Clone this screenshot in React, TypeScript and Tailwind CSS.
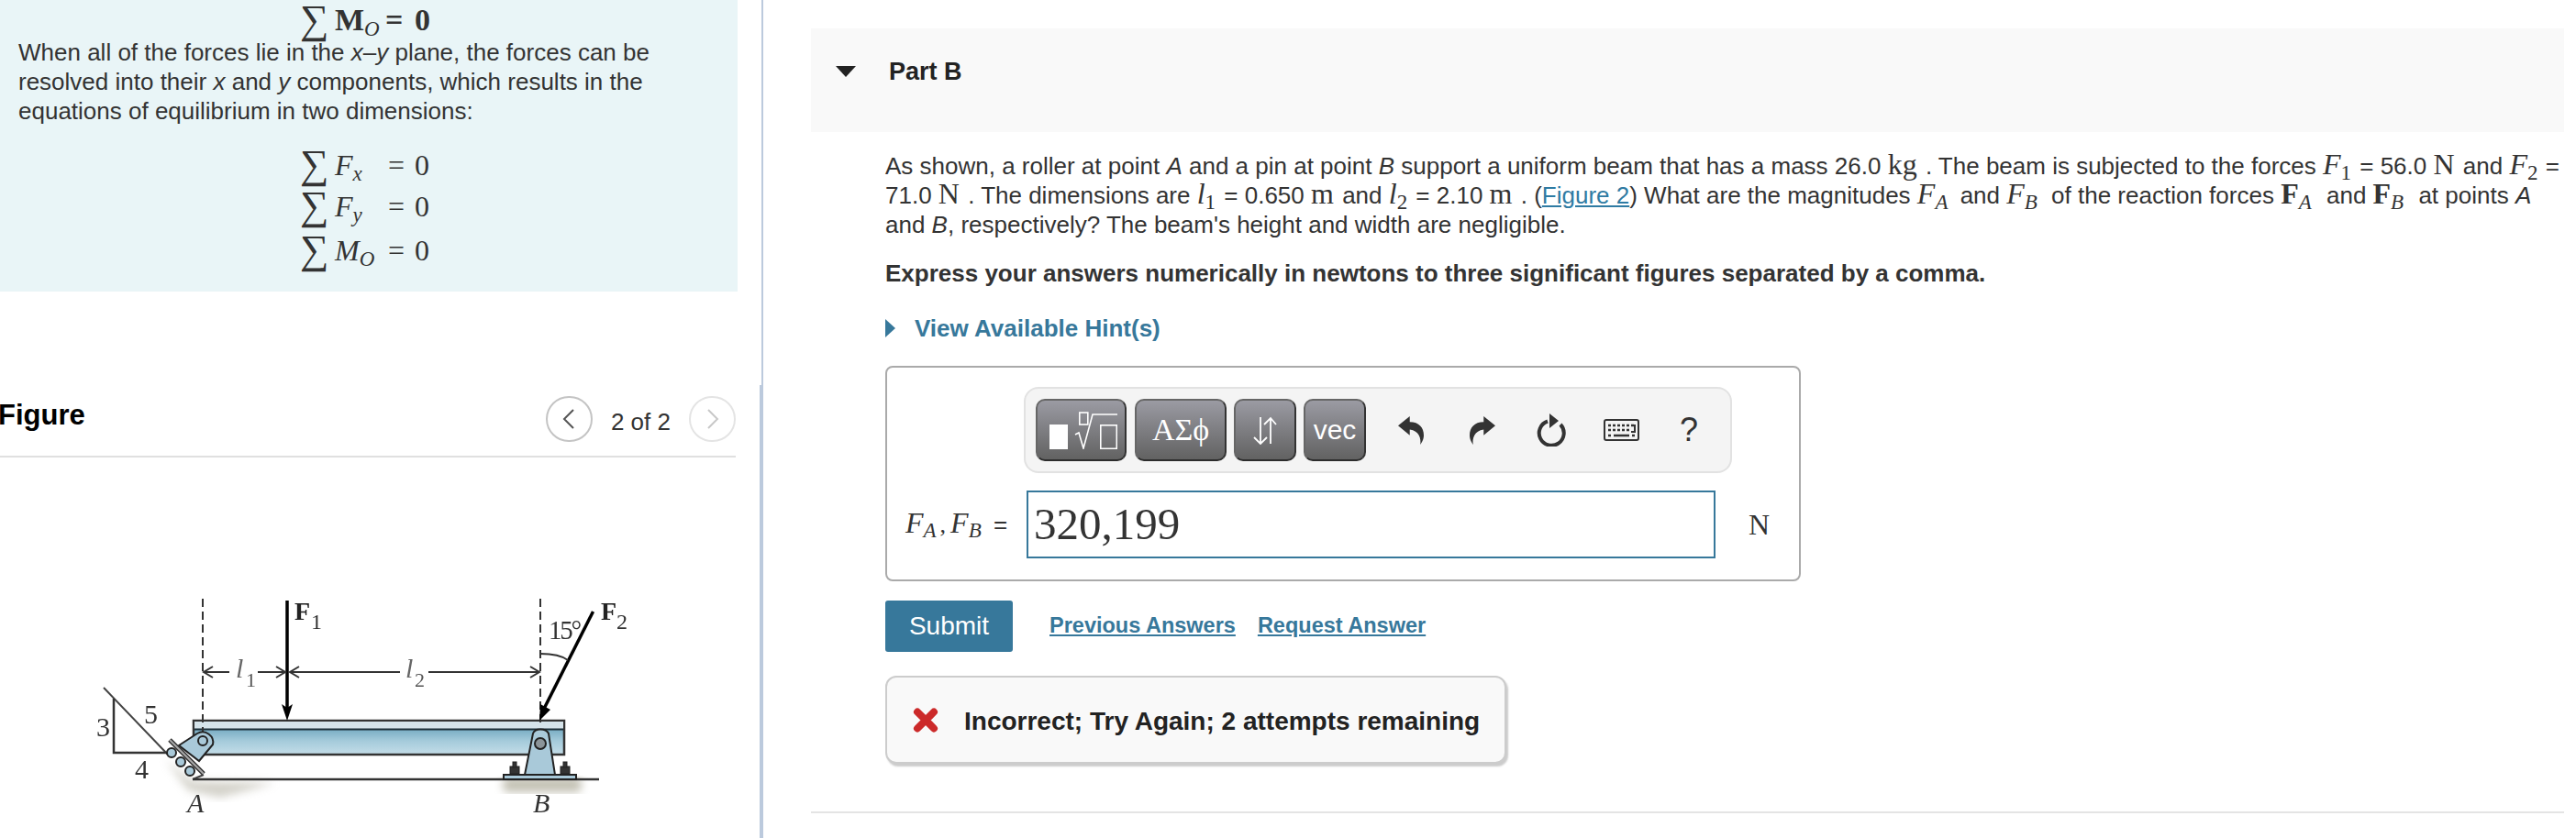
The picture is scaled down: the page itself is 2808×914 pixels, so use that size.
function Sum() {
  return <span className="inline-block w-[38px] font-['Liberation_Serif',serif] text-[44px] leading-[32px] font-normal">∑</span>;
}

function M({ children, sub, bold, plainSub, className }: { children: React.ReactNode; sub?: string; bold?: boolean; plainSub?: boolean; className?: string }) {
  return (
    <span className={`font-['Liberation_Serif',serif] text-[32px] leading-[0] ${bold ? "font-bold" : "italic"} ${className ?? ""}`}>
      {children}
      {sub && <sub className={`text-[23px] font-normal ${plainSub ? "not-italic" : "italic"}`}>{sub}</sub>}
    </span>
  );
}

function R({ children, className }: { children: React.ReactNode; className?: string }) {
  return <span className={`font-['Liberation_Serif',serif] text-[32px] leading-[0] ${className ?? ""}`}>{children}</span>;
}

function EqRow({ name, sub, bold, top }: { name: string; sub: string; bold?: boolean; top?: string }) {
  return (
    <div className={`flex items-center h-[44px] font-['Liberation_Serif',serif] leading-[32px] text-[#333] ${bold ? "text-[34px]" : "text-[32px]"} ${top ?? ""}`}>
      <Sum />
      <span className={bold ? "w-[55px] font-bold" : "w-[58px] italic"}>
        {name}
        <sub className="text-[23px] italic font-normal">{sub}</sub>
      </span>
      <span className={bold ? "font-bold" : ""}>
        = <span className={bold ? "ml-[4px]" : "ml-[3px]"}>0</span>
      </span>
    </div>
  );
}

function Chevron({ dir, muted }: { dir: "l" | "r"; muted?: boolean }) {
  return (
    <div className={`w-[51px] h-[50px] rounded-full border-2 flex items-center justify-center ${muted ? "border-[#e4e4e4]" : "border-[#c4c4c4]"}`}>
      <svg width="16" height="24" viewBox="0 0 16 24" fill="none" stroke={muted ? "#c8c8c8" : "#555"} strokeWidth="2">
        <path d={dir === "l" ? "M13 2 L3 12 L13 22" : "M3 2 L13 12 L3 22"} />
      </svg>
    </div>
  );
}

function BeamFigure() {
  return (
    <svg width="700" height="290" viewBox="0 0 700 290" className="block blur-[0.5px]">
      <defs>
        <linearGradient id="web" x1="0" y1="0" x2="0" y2="1">
          <stop offset="0" stopColor="#5896b2" />
          <stop offset="0.6" stopColor="#a5cbdb" />
          <stop offset="1" stopColor="#c4dde8" />
        </linearGradient>
        <filter id="soft">
          <feGaussianBlur stdDeviation="5" />
        </filter>
      </defs>
      {/* origin of this drawing is page x 0, y 620 */}
      <path d="M180 208 L210 232 L300 234 L240 250 L205 242 Z" fill="#c9c7bd" filter="url(#soft)" opacity="0.8" />
      <rect x="548" y="228" width="86" height="16" rx="6" fill="#c4c2b5" filter="url(#soft)" />
      <path d="M113 130 L183 203 M210 230 L222 225" stroke="#444" strokeWidth="2" fill="none" />
      <path d="M124 142 V201 H182" stroke="#333" strokeWidth="2.5" fill="none" />
      <path d="M210 230 H653" stroke="#333" strokeWidth="2.5" />
      <rect x="211" y="166" width="404" height="37" fill="url(#web)" stroke="#333" strokeWidth="2.5" />
      <rect x="212" y="167" width="402" height="8" fill="#d5e3ea" />
      <path d="M212 175.5 H614" stroke="#1c2f38" strokeWidth="2" />
      <path d="M221 33 V186" stroke="#333" strokeWidth="2" strokeDasharray="9 5" fill="none" />
      <path d="M589 33 V170" stroke="#333" strokeWidth="2" strokeDasharray="9 5" fill="none" />
      <path d="M313 35 V155" stroke="#000" strokeWidth="3.5" />
      <path d="M307 148 L313 166 L319 148 L313 152 Z" fill="#000" />
      <path d="M646.5 47 L593 153" stroke="#000" strokeWidth="3.5" />
      <path d="M588 166 L589 148 L600 154 Z" fill="#000" />
      <path d="M589 93 C600 93 611 94 619 100" stroke="#333" strokeWidth="1.8" fill="none" />
      <path d="M222 113 H250 M281 113 H311 M316 113 H436 M467 113 H587" stroke="#333" strokeWidth="2" />
      <path d="M232 107 L222 113 L232 119 M301 107 L311 113 L301 119 M326 107 L316 113 L326 119 M578 107 L588 113 L578 119" stroke="#333" strokeWidth="2" fill="none" />
      <g fill="#a9c9d9" stroke="#222" strokeWidth="2">
        <circle cx="187" cy="201" r="5" />
        <circle cx="197" cy="211" r="5" />
        <circle cx="207" cy="221" r="5" />
        <path d="M195 193 L215 180 C224 175 234 183 232 192 L217 210 Z" />
        <circle cx="221" cy="188" r="5" fill="none" />
        <path d="M572 225 L581 180 C583 174 595 174 598 180 L605 225 Z" />
        <rect x="549" y="225" width="79" height="5" />
        <circle cx="589" cy="191" r="6" fill="#8b9499" />
      </g>
      <path d="M185 187 L222 224" stroke="#333" strokeWidth="5" />
      <path d="M185 187 L222 224" stroke="#aaa" strokeWidth="2" />
      <g fill="#333" stroke="#222" strokeWidth="1">
        <rect x="556" y="216" width="10" height="8" />
        <rect x="559" y="211" width="4" height="6" />
        <rect x="611" y="216" width="10" height="8" />
        <rect x="614" y="211" width="4" height="6" />
      </g>
      <g fontFamily="'Liberation Serif', serif" fill="#333">
        <text x="321" y="56" fontSize="28" fontWeight="700" fill="#222">F</text>
        <text x="339" y="66" fontSize="24">1</text>
        <text x="655" y="56" fontSize="28" fontWeight="700" fill="#222">F</text>
        <text x="672" y="66" fontSize="24">2</text>
        <text x="598" y="77" fontSize="29" textLength="36">15°</text>
        <text x="257" y="119" fontSize="30" fontStyle="italic" fill="#666">l</text>
        <text x="268" y="129" fontSize="22" fill="#555">1</text>
        <text x="442" y="119" fontSize="30" fontStyle="italic" fill="#666">l</text>
        <text x="452" y="129" fontSize="22" fill="#555">2</text>
        <text x="105" y="183" fontSize="30">3</text>
        <text x="157" y="169" fontSize="30">5</text>
        <text x="147" y="229" fontSize="30">4</text>
        <text x="204" y="266" fontSize="30" fontStyle="italic">A</text>
        <text x="581" y="266" fontSize="30" fontStyle="italic">B</text>
      </g>
    </svg>
  );
}

function RadicalIcon() {
  return (
    <svg width="74" height="41" viewBox="0 0 74 41" fill="none" stroke="#fff" strokeWidth="1.6" className="ml-[4px]">
      <rect x="0" y="14" width="20" height="27" fill="#fff" stroke="none" />
      <rect x="32.8" y="1" width="9" height="13" />
      <path d="M28 25 L32 23 L37 40 L47 3 H74" />
      <rect x="55.8" y="14.8" width="17.5" height="25.5" />
    </svg>
  );
}

function ToolButton({ w, children }: { w: string; children: React.ReactNode }) {
  return (
    <div className={`${w} h-[68px] rounded-[10px] border-2 border-[#666] border-b-[#2c2c2c] border-r-[#333] bg-gradient-to-b from-[#9b9ba3] to-[#626262] flex items-center justify-center text-white`}>
      {children}
    </div>
  );
}

function Toolbar() {
  return (
    <div className="w-[772px] h-[94px] rounded-[16px] border-2 border-[#e2e2e2] bg-[#f4f4f4] flex items-center pl-[11px]">
      <ToolButton w="w-[99px]"><RadicalIcon /></ToolButton>
      <div className="ml-[9px]">
        <ToolButton w="w-[100px]">
          <span className="font-['Liberation_Serif',serif] text-[34px]">ΑΣϕ</span>
        </ToolButton>
      </div>
      <div className="ml-[8px]">
        <ToolButton w="w-[68px]">
          <svg width="26" height="31" viewBox="0 0 26 31" fill="none" stroke="#fff" strokeWidth="1.8">
            <path d="M8 1 V30 M1 23 L8 30 L15 23 M19 30 V2 M12 9 L19 2 L25 9" />
          </svg>
        </ToolButton>
      </div>
      <div className="ml-[8px]">
        <ToolButton w="w-[68px]">
          <span className="font-['Liberation_Sans',sans-serif] text-[30px]">vec</span>
        </ToolButton>
      </div>
      <svg width="28" height="31" viewBox="0 0 22 30" fill="#333" preserveAspectRatio="none" className="ml-[35px]">
        <path d="M0 10 L10 0 V6 C18 6 22 12 22 20 C22 25 20 28 19 30 C20 24 18 15 10 14 V20 Z" />
      </svg>
      <svg width="28" height="31" viewBox="0 0 22 30" fill="#333" preserveAspectRatio="none" className="ml-[50px] -scale-x-100">
        <path d="M0 10 L10 0 V6 C18 6 22 12 22 20 C22 25 20 28 19 30 C20 24 18 15 10 14 V20 Z" />
      </svg>
      <svg width="32" height="36" viewBox="0 0 32 36" className="ml-[45px]" fill="none">
        <path d="M12 8.5 A13.5 13.5 0 1 0 26 12" stroke="#333" strokeWidth="4" />
        <path d="M14 0 L24 8 L14 16 Z" fill="#333" />
      </svg>
      <svg width="39" height="24" viewBox="0 0 39 24" className="ml-[41px]" fill="none">
        <rect x="1" y="1" width="37" height="22" rx="2" stroke="#333" strokeWidth="2" />
        <path d="M5 7 H34" stroke="#333" strokeWidth="2.5" strokeDasharray="3 2" />
        <path d="M5 12 H30" stroke="#333" strokeWidth="2.5" strokeDasharray="3 2" />
        <path d="M34 6 V14 H30" stroke="#333" strokeWidth="2" />
        <path d="M11 18 H28 M5 18 H8 M31 18 H34" stroke="#333" strokeWidth="2.5" />
      </svg>
      <span className="ml-[44px] font-['Liberation_Sans',sans-serif] text-[36px] text-[#333] leading-none">?</span>
    </div>
  );
}

export default function App() {
  return (
    <div className="w-[2808px] h-[914px] overflow-hidden flex bg-white font-['Liberation_Sans',sans-serif] text-[26px] leading-[32px] text-[#333]">
      {/* left column */}
      <div className="w-[828px] shrink-0">
        <div className="w-[804px] h-[318px] bg-[#e9f5f7] pl-[20px]">
          <div className="pl-[307px]">
            <EqRow name="M" sub="O" bold />
          </div>
          <p className="-mt-[3px]">
            When all of the forces lie in the <i>x</i>–<i>y</i> plane, the forces can be<br />
            resolved into their <i>x</i> and <i>y</i> components, which results in the<br />
            equations of equilibrium in two dimensions:
          </p>
          <div className="pl-[307px] mt-[21px]">
            <EqRow name="F" sub="x" />
            <EqRow name="F" sub="y" top="mt-[1px]" />
            <EqRow name="M" sub="O" top="mt-[4px]" />
          </div>
        </div>
        <div className="w-[802px] h-[67px] mt-[114px] border-b-2 border-[#e0e0e0] flex items-start">
          <span className="text-[31px] leading-[40px] mt-[1px] font-bold text-black -ml-[2px]">Figure</span>
          <div className="ml-auto flex items-center">
            <Chevron dir="l" />
            <span className="mx-[20px] mt-[6px]">2 of 2</span>
            <Chevron dir="r" muted />
          </div>
        </div>
        <div className="mt-[121px]">
          <BeamFigure />
        </div>
      </div>

      {/* divider */}
      <div className="w-[4px] shrink-0 flex flex-col items-end">
        <div className="w-[2px] h-[420px] bg-[#bccadd]" />
        <div className="w-[4px] flex-1 bg-[#bccadd]" />
      </div>

      {/* right column */}
      <div className="w-[1963px] pl-[52px] pt-[31px] shrink-0">
        <div className="w-[1911px] h-[113px] bg-[#f9f9f9]">
          <div className="h-[94px] flex items-center pl-[27px] font-bold">
            <div className="w-0 h-0 border-l-[11px] border-r-[11px] border-t-[12px] border-l-transparent border-r-transparent border-t-[#222]" />
            <span className="ml-[36px] text-[27px] text-[#222]">Part B</span>
          </div>
        </div>
        <div className="ml-[81px]">
          <p className="mt-[21px] whitespace-nowrap">
            As shown, a roller at point <i>A</i> and a pin at point <i>B</i> support a uniform beam that has a mass 26.0 <R className="mr-[2px]">kg</R> . The beam is subjected to the forces <M sub="1" plainSub className="mr-[2px]">F</M> = 56.0 <R className="mr-[2px]">N</R> and <M sub="2" plainSub className="mr-[1px]">F</M> =<br />
            71.0 <R className="mr-[2px]">N</R> . The dimensions are <M sub="1" plainSub className="mr-[2px]">l</M> = 0.650 <R className="mr-[2px]">m</R> and <M sub="2" plainSub className="mr-[2px]">l</M> = 2.10 <R className="mr-[2px]">m</R> . (<a className="text-[#2f7ba3] underline">Figure 2</a>) What are the magnitudes <M sub="A" className="mr-[6px]">F</M> and <M sub="B" className="mr-[8px]">F</M> of the reaction forces <M bold sub="A" className="mr-[9px]">F</M> and <M bold sub="B" className="mr-[9px]">F</M> at points <i>A</i><br />
            and <i>B</i>, respectively? The beam's height and width are negligible.
          </p>
          <p className="mt-[21px] font-bold">Express your answers numerically in newtons to three significant figures separated by a comma.</p>
          <div className="mt-[28px] flex items-center font-bold text-[#37789b]">
            <div className="w-0 h-0 border-l-[11px] border-y-[10px] border-y-transparent border-l-[#37789b]" />
            <span className="ml-[21px]">View Available Hint(s)</span>
          </div>

          <div className="mt-[25px] w-[998px] h-[235px] rounded-[8px] border-2 border-[#aaa] pl-[149px] pt-[21px]">
            <Toolbar />
            <div className="flex items-center mt-[19px] -ml-[129px]">
              <div className="w-[132px] whitespace-nowrap">
                <M sub="A" className="mr-[4px]">F</M>
                <span className="font-['Liberation_Serif',serif] mr-[5px]">,</span>
                <M sub="B" className="mr-[6px]">F</M> <span>=</span>
              </div>
              <div className="w-[751px] h-[74px] border-2 border-[#37789b] flex items-center pl-[6px] font-['Liberation_Serif',serif] text-[49px]">320,199</div>
              <span className="ml-[36px] font-['Liberation_Serif',serif] text-[32px]">N</span>
            </div>
          </div>

          <div className="mt-[21px] flex items-center">
            <div className="w-[139px] h-[56px] bg-[#37789b] rounded-[3px] flex items-center justify-center text-white text-[28px]">Submit</div>
            <a className="ml-[40px] text-[23.5px] font-bold text-[#37789b] underline -mt-[2px]">Previous Answers</a>
            <a className="ml-[24px] text-[23.5px] font-bold text-[#37789b] underline -mt-[2px]">Request Answer</a>
          </div>

          <div className="mt-[26px] w-[677px] h-[96px] rounded-[12px] border-2 border-[#ccc] bg-[#f9f9f9] shadow-[2px_3px_2px_#ccc] flex items-center pl-[28px] font-bold text-[#222]">
            <svg width="28" height="27" viewBox="0 0 28 27">
              <path d="M5 4.5 L23 22.5 M23 4.5 L5 22.5" stroke="#cc2a2a" strokeWidth="8" strokeLinecap="round" />
            </svg>
            <span className="ml-[28px] mt-[3px] text-[28px]">Incorrect; Try Again; 2 attempts remaining</span>
          </div>
        </div>
        <div className="w-[1911px] h-[2px] bg-[#e4e4e4] mt-[52px]" />
      </div>
    </div>
  );
}
